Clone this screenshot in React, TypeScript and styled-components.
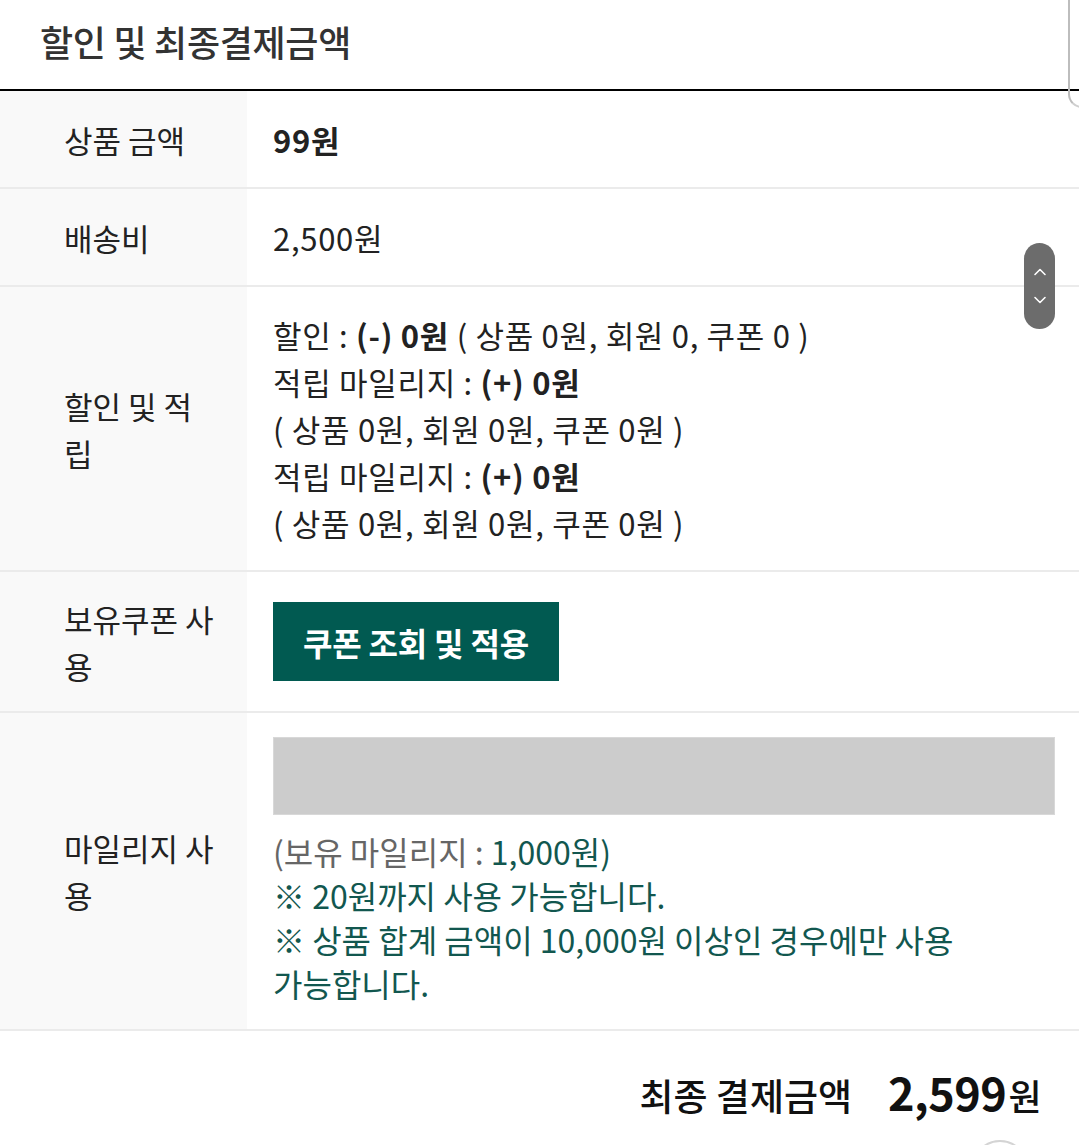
import React from "react"
import styled, { createGlobalStyle } from "styled-components"

const Global = createGlobalStyle`
  html, body { margin: 0; padding: 0; background: #fff; }
  body { font-family: "Noto Sans CJK KR", "Noto Sans", sans-serif; color: #222; }
`

const ChevronUp = () => (
  <svg width="14" height="10" viewBox="0 0 14 10" fill="none">
    <path d="M2 7.5 L7 2.5 L12 7.5" stroke="#fff" strokeWidth="1.6" strokeLinecap="round" strokeLinejoin="round" />
  </svg>
)

const ChevronDown = () => (
  <svg width="14" height="10" viewBox="0 0 14 10" fill="none">
    <path d="M2 2.5 L7 7.5 L12 2.5" stroke="#fff" strokeWidth="1.6" strokeLinecap="round" strokeLinejoin="round" />
  </svg>
)

const rows = [
  { label: "상품 금액", value: <b>99원</b> },
  { label: "배송비", value: "2,500원" },
]

export default function App() {
  return (
    <S.Page>
      <Global />
      <S.Header>
        <S.Title>할인 및 최종결제금액</S.Title>
        <S.EdgeCurve />
      </S.Header>

      <S.Table>
        {rows.map((r) => (
          <S.Row key={r.label} $minHeight={96}>
            <S.Label>{r.label}</S.Label>
            <S.Value>{r.value}</S.Value>
          </S.Row>
        ))}

        <S.Row>
          <S.Label>할인 및 적립</S.Label>
          <S.Value $padY={24}>
            <div>
              할인 : <b>(-) 0원</b> ( 상품 0원, 회원 0, 쿠폰 0 )
            </div>
            <div>
              적립 마일리지 : <b>(+) 0원</b>
            </div>
            <div>( 상품 0원, 회원 0원, 쿠폰 0원 )</div>
            <div>
              적립 마일리지 : <b>(+) 0원</b>
            </div>
            <div>( 상품 0원, 회원 0원, 쿠폰 0원 )</div>
          </S.Value>
        </S.Row>

        <S.Row>
          <S.Label>보유쿠폰 사용</S.Label>
          <S.Value $padY={30}>
            <S.CouponButton type="button">쿠폰 조회 및 적용</S.CouponButton>
          </S.Value>
        </S.Row>

        <S.Row>
          <S.Label>마일리지 사용</S.Label>
          <S.Value $padY={24}>
            <S.MileageInput disabled />
            <S.Notes>
              <div>
                <S.Muted>(보유 마일리지 : </S.Muted>1,000원)
              </div>
              <div>※ 20원까지 사용 가능합니다.</div>
              <div>※ 상품 합계 금액이 10,000원 이상인 경우에만 사용 가능합니다.</div>
            </S.Notes>
          </S.Value>
        </S.Row>
      </S.Table>

      <S.Footer>
        <S.TotalLabel>최종 결제금액</S.TotalLabel>
        <S.TotalAmount>
          2,599<S.Won>원</S.Won>
        </S.TotalAmount>
      </S.Footer>

      <S.ScrollPill>
        <ChevronUp />
        <ChevronDown />
      </S.ScrollPill>
      <S.CornerButton />
    </S.Page>
  )
}

const S = {
  Page: styled.div`
    position: relative;
    width: 1079px;
    min-height: 1145px;
    overflow: hidden;
  `,
  Header: styled.div`
    position: relative;
    height: 89px;
    border-bottom: 2px solid #000;
    display: flex;
    align-items: center;
    padding-left: 40px;
  `,
  Title: styled.h2`
    margin: 0 0 8px;
    font-size: 36px;
    font-weight: 500;
    color: #333;
    letter-spacing: -0.3px;
  `,
  EdgeCurve: styled.div`
    position: absolute;
    left: 1068px;
    top: -20px;
    width: 40px;
    height: 126px;
    border-left: 2px solid #bdbdbd;
    border-bottom: 2px solid #cfcfcf;
    border-bottom-left-radius: 14px;
  `,
  Table: styled.div`
    display: flex;
    flex-direction: column;
  `,
  Row: styled.div<{ $minHeight?: number }>`
    display: grid;
    grid-template-columns: 247px 1fr;
    min-height: ${(p) => (p.$minHeight ? `${p.$minHeight}px` : "0")};
    border-bottom: 2px solid #ebebeb;
  `,
  Label: styled.div`
    display: flex;
    align-items: center;
    padding: 0 31px 0 64px;
    background: #f9f9f9;
    font-size: 31px;
    line-height: 47px;
    color: #222;
  `,
  Value: styled.div<{ $padY?: number }>`
    display: flex;
    flex-direction: column;
    justify-content: center;
    padding: ${(p) => p.$padY ?? 0}px 24px ${(p) => p.$padY ?? 0}px 26px;
    font-size: 31px;
    line-height: 47px;
    letter-spacing: 0.7px;
    color: #222;
    b { font-weight: 700; }
  `,
  CouponButton: styled.button`
    align-self: flex-start;
    height: 79px;
    padding: 0 30px;
    border: 0;
    background: #015a51;
    color: #fff;
    font-family: "Noto Sans CJK KR", sans-serif;
    font-size: 32px;
    font-weight: 700;
    letter-spacing: -0.2px;
  `,
  MileageInput: styled.input`
    box-sizing: border-box;
    width: 100%;
    height: 78px;
    margin: 0 0 14px;
    border: 1px solid #d8d8d8;
    background: #cccccc;
  `,
  Notes: styled.div`
    font-size: 32px;
    line-height: 44px;
    color: #12574f;
    letter-spacing: 0;
    word-break: keep-all;
  `,
  Muted: styled.span`
    color: #666;
  `,
  Footer: styled.div`
    display: flex;
    justify-content: flex-end;
    align-items: baseline;
    gap: 36px;
    padding: 28px 38px 0 0;
  `,
  TotalLabel: styled.span`
    font-size: 37px;
    font-weight: 500;
    color: #111;
  `,
  TotalAmount: styled.span`
    font-size: 45px;
    font-weight: 700;
    color: #111;
    letter-spacing: -0.5px;
  `,
  Won: styled.span`
    font-size: 36px;
    font-weight: 500;
    margin-left: 2px;
  `,
  ScrollPill: styled.div`
    position: absolute;
    left: 1024px;
    top: 243px;
    width: 31px;
    height: 86px;
    border-radius: 16px;
    background: #6c6c6c;
    display: flex;
    flex-direction: column;
    align-items: center;
    justify-content: center;
    gap: 18px;
  `,
  CornerButton: styled.div`
    position: absolute;
    left: 972px;
    top: 1140px;
    width: 52px;
    height: 52px;
    border-radius: 50%;
    border: 2px solid #d4d4d4;
    background: #fff;
  `,
}
